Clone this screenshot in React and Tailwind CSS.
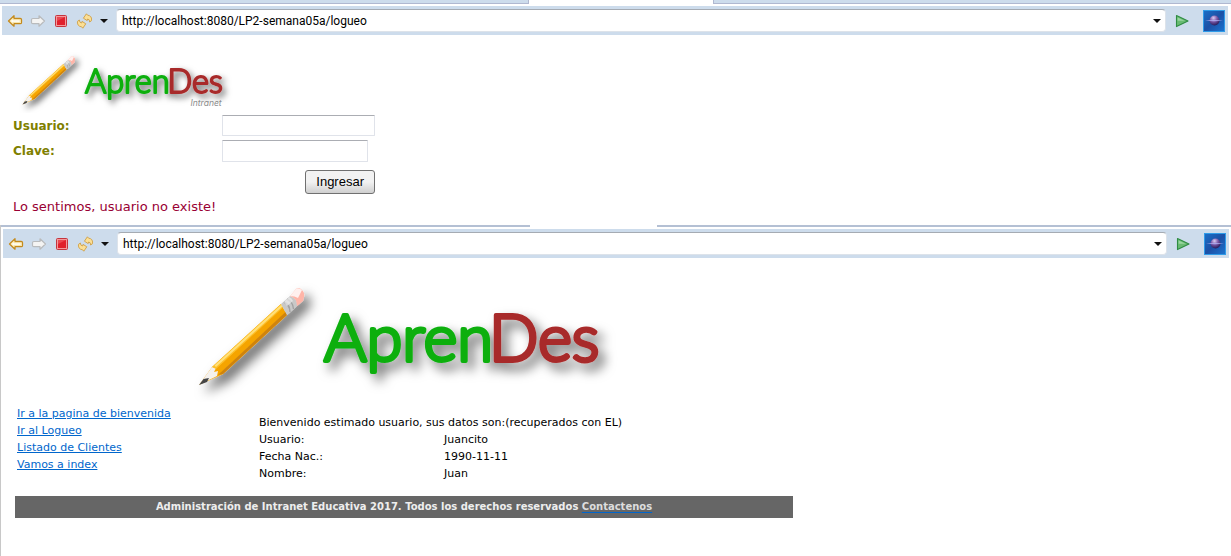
import React from "react";

function BackArrow() {
  return (
    <svg width="16" height="16" viewBox="0 0 16 16">
      <path d="M1.5 8 L7 2.8 V5.5 H13.2 Q14.5 5.5 14.5 6.8 V9.4 Q14.5 10.6 13.2 10.6 H7 V13.2 Z" fill="#fff8dc" stroke="#c48a1c" strokeWidth="1.3" strokeLinejoin="round" />
      <path d="M3.2 8 L6 5.4 V6.7 H13.2 V9.4 H6 V10.6 Z" fill="#fffdf2" stroke="#f3d98a" strokeWidth="0.7" />
    </svg>
  );
}

function ForwardArrow() {
  return (
    <svg width="16" height="16" viewBox="0 0 16 16">
      <path d="M14.5 8 L9 2.8 V5.5 H2.8 Q1.5 5.5 1.5 6.8 V9.4 Q1.5 10.6 2.8 10.6 H9 V13.2 Z" fill="#f4f4f3" stroke="#b9bbbd" strokeWidth="1.2" strokeLinejoin="round" />
    </svg>
  );
}

function StopIcon() {
  return (
    <svg width="16" height="16" viewBox="0 0 16 16">
      <rect x="2.5" y="2.5" width="11" height="11" rx="1" fill="#f39a9c" stroke="#c5343d" />
      <rect x="4" y="4" width="8" height="8" fill="#e0202c" />
      <path d="M4 4 H12 L4 8 Z" fill="#ea4750" />
    </svg>
  );
}

function RefreshIcon() {
  return (
    <svg width="16" height="16" viewBox="0 0 16 16" fill="#fbdf95" stroke="#cf9f45" strokeWidth="0.9" strokeLinejoin="round">
      <path d="M7.4 5.2 L10.4 0.8 L11.6 2.2 Q15.8 2.6 15.6 7 Q15.2 8.6 13.6 9 Q13.8 6.2 11.6 6 L11.2 7.6 Z" />
      <path d="M9.8 10.8 L6.8 15.2 L5.6 13.8 Q1.4 13.4 1.4 9 Q1.8 7.400 3.4 7 Q3.4 9.8 5.6 10 L6 8.400 Z" />
    </svg>
  );
}

function Caret() {
  return (
    <svg width="10" height="6" viewBox="0 0 10 6">
      <path d="M1 1 H9 L5 5 Z" fill="#111" />
    </svg>
  );
}

function PlayIcon() {
  return (
    <svg width="16" height="16" viewBox="0 0 16 16">
      <path d="M2.5 2.6 L14 8 L2.5 13.6 Z" fill="#69bb72" stroke="#2f8c43" strokeWidth="1.1" strokeLinejoin="round" />
      <path d="M3.6 4.4 L10.6 7.8 H3.6 Z" fill="#9bd6a0" />
    </svg>
  );
}

function PlanetIcon({ id }) {
  return (
    <svg width="22" height="22" viewBox="0 0 22 22">
      <defs>
        <linearGradient id={`${id}-sky`} x1="0" y1="0" x2="1" y2="1">
          <stop offset="0" stopColor="#1a70c8" />
          <stop offset="0.5" stopColor="#1c50a6" />
          <stop offset="1" stopColor="#1b74d0" />
        </linearGradient>
        <radialGradient id={`${id}-ball`} cx="0.4" cy="0.25" r="0.8">
          <stop offset="0" stopColor="#d9ccf2" />
          <stop offset="0.45" stopColor="#7a58a8" />
          <stop offset="1" stopColor="#1d1450" />
        </radialGradient>
      </defs>
      <rect x="0.5" y="0.5" width="21" height="21" fill={`url(#${id}-sky)`} stroke="#2f9be8" />
      <circle cx="11.5" cy="10.5" r="5" fill={`url(#${id}-ball)`} />
      <path d="M2 10.6 Q11 9.4 20 10.6 Q11 12 2 10.6 Z" fill="#a9a6ea" />
    </svg>
  );
}

function Toolbar({ id }) {
  return (
    <div className="flex h-[29px] items-center gap-[7px] bg-[#cddcec] pl-[5px] pr-[3px]">
      <button aria-label="Atrás"><BackArrow /></button>
      <button aria-label="Adelante"><ForwardArrow /></button>
      <button aria-label="Detener"><StopIcon /></button>
      <button aria-label="Actualizar"><RefreshIcon /></button>
      <button aria-label="Opciones"><Caret /></button>
      <div className="flex h-[23px] min-w-0 flex-1 items-center rounded-sm border border-[#dde3ea] border-t-[#a5abb3] bg-white pr-[3px]">
        <input
          aria-label="Dirección"
          defaultValue="http://localhost:8080/LP2-semana05a/logueo"
          className="h-5 min-w-0 flex-1 bg-transparent pl-[5px] font-[Roboto,sans-serif] text-[12px] text-black outline-none"
        />
        <button aria-label="Historial"><Caret /></button>
      </div>
      <button aria-label="Ir" className="ml-px"><PlayIcon /></button>
      <button aria-label="Navegador" className="ml-[6px]"><PlanetIcon id={id} /></button>
    </div>
  );
}

function Logo({ id, className, caption }) {
  return (
    <svg viewBox="0 0 430 132" className={className} role="img" aria-label="AprenDes">
      <defs>
        <filter id={`${id}-shadow`} x="-20%" y="-20%" width="150%" height="160%">
          <feDropShadow dx="6" dy="7" stdDeviation="6" floodColor="#000" floodOpacity="0.6" />
        </filter>
      </defs>
      <g filter={`url(#${id}-shadow)`}>
        <path d="M9 115 L22 97 L91 34 L97 45 L33 104 Z" fill="#f5a400" />
        <path d="M9 115 L22 97 L26 98 L24 102 L28 101 L27 106 Z" fill="#f4f1ee" />
        <path d="M22 97 L91 34 L93 37.500 L26 99 Z" fill="#fdc02c" />
        <path d="M24.500 95.500 L91.500 34.500 L92.500 36.500 L26 97 Z" fill="#ffe07a" />
        <path d="M28 105 L95.500 42 L97 45 L33 104 Z" fill="#cf8410" />
        <path d="M9 115 L13.500 109 L19 108 L17 112 Z" fill="#444" />
        <path d="M91 34 L100 26 Q107 28 107 36 L97 45 Z" fill="#c8c8c8" />
        <path d="M94 32 Q100 35 100 42 M97 29 Q103 32 103.500 39" fill="none" stroke="#a2a2a2" strokeWidth="1.4" />
        <path d="M94 32 L99 27 Q102 28 103 31 L97 36 Z" fill="#ececec" opacity="0.7" />
        <path d="M100 26 L106 19 Q108 17 111 19 Q115 22 114 27 L113 31 L107 36 Q107 28 100 26 Z" fill="#ffb5a8" />
        <path d="M100 26 L106 19 Q108 17 112 20 L108 28 Q105 26 100 26 Z" fill="#fff0ee" />
      </g>
      <g
        filter={`url(#${id}-shadow)`}
        fontFamily="Lato, 'Open Sans', sans-serif"
        fontSize="65"
        fontWeight="300"
        strokeWidth="4"
        strokeLinejoin="round"
      >
        <text x="134" y="91" fill="#0aaf0f" stroke="#0aaf0f">Apren</text>
        <text x="299" y="91" fill="#a82a2a" stroke="#a82a2a">Des</text>
      </g>
      {caption && (
        <text x="345" y="118" fontFamily="Inter, sans-serif" fontSize="17" fontStyle="italic" fill="#8c8c8c">
          {caption}
        </text>
      )}
    </svg>
  );
}

function LoginPage() {
  return (
    <main className="px-[13px] pb-2 pt-3">
      <Logo id="small" caption="Intranet" className="ml-[5px] h-[66px] w-[215px]" />
      <form
        className="mt-[2px] grid w-fit grid-cols-[209px_153px] items-center gap-y-1 text-[13px]"
        onSubmit={(e) => e.preventDefault()}
      >
        <label htmlFor="usuario" className="text-[12px] font-bold text-[#808000]">Usuario:</label>
        <input id="usuario" type="text" className="h-[21px] w-full rounded-[1px] border border-[#e0e3ea] border-t-[#abadb3] px-1" />
        <label htmlFor="clave" className="text-[12px] font-bold text-[#808000]">Clave:</label>
        <input id="clave" type="password" className="h-[22px] w-[146px] rounded-[1px] border border-[#e0e3ea] border-t-[#abadb3] px-1" />
        <button
          type="submit"
          className="col-start-2 mt-1 h-6 justify-self-end rounded-[3px] border border-[#707070] bg-linear-to-b from-[#f2f2f2] from-50% to-[#cfcfcf] px-[10px] font-['Liberation_Sans',sans-serif] text-[13px] leading-5 text-black"
        >
          Ingresar
        </button>
      </form>
      <p className="mt-[3px] text-[13px] leading-5 text-[#990033]">Lo sentimos, usuario no existe!</p>
    </main>
  );
}

const links = ["Ir a la pagina de bienvenida", "Ir al Logueo", "Listado de Clientes", "Vamos a index"];

const userData = [
  ["Usuario:", "Juancito"],
  ["Fecha Nac.:", "1990-11-11"],
  ["Nombre:", "Juan"],
];

function WelcomePage() {
  return (
    <main className="px-[14px] pt-3 text-[11px] leading-[17px]">
      <Logo id="large" className="ml-[175px] h-[132px] w-[430px]" />
      <div className="flex w-[778px] pt-[3px]">
        <nav className="flex w-[244px] flex-col items-start pl-[2px]">
          {links.map((text) => (
            <a key={text} href="#" className="text-[#0066cc] underline">{text}</a>
          ))}
        </nav>
        <table className="mt-[9px] border-collapse text-left text-black">
          <tbody>
            <tr>
              <td colSpan={2} className="p-0">Bienvenido estimado usuario, sus datos son:(recuperados con EL)</td>
            </tr>
            {userData.map(([label, value]) => (
              <tr key={label}>
                <th scope="row" className="w-[185px] p-0 font-normal">{label}</th>
                <td className="p-0">{value}</td>
              </tr>
            ))}
          </tbody>
        </table>
      </div>
      <footer className="mt-[14px] w-[778px] bg-[#666666] text-center text-[10px] font-bold leading-[22px] text-[#eeeeee]">
        Administración de Intranet Educativa 2017. Todos los derechos reservados{" "}
        <a href="#" className="text-[#dddddd] underline decoration-[#0066cc] decoration-1 underline-offset-2">Contactenos</a>
      </footer>
    </main>
  );
}

export default function App() {
  return (
    <div className="min-h-screen bg-white font-['DejaVu_Sans',Verdana,sans-serif]">
      <section>
        <div className="flex h-1">
          <div className="w-[529px] border-b border-r border-[#b0b8d0] bg-[#cddcec]" />
          <div className="w-[184px]" />
          <div className="flex-1 border-b border-l border-[#b0b8d0] bg-[#cddcec]" />
        </div>
        <div className="ml-[2px] mr-[3px] pt-[2px]">
          <Toolbar id="first" />
        </div>
        <LoginPage />
      </section>
      <section className="flex min-h-[331px] flex-col border-l border-[#c8c8c8]">
        <div className="flex h-[2px]">
          <div className="w-[529px] bg-[#b4c0d4]" />
          <div className="w-[127px]" />
          <div className="flex-1 bg-[#b4c0d4]" />
        </div>
        <div className="ml-[2px] mr-[2px] pt-[2px]">
          <Toolbar id="second" />
        </div>
        <WelcomePage />
      </section>
    </div>
  );
}
